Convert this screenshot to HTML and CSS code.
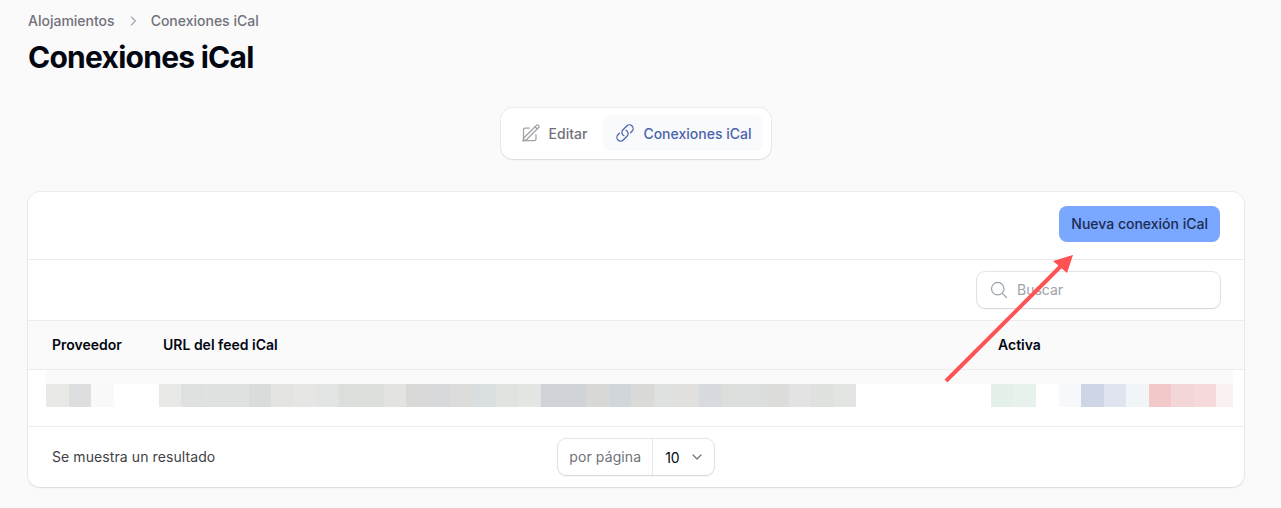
FILE: index.html
```html
<!DOCTYPE html>
<html lang="es">
<head>
  <meta charset="UTF-8">
  <title>Conexiones iCal</title>
  <link rel="stylesheet" href="styles.css">
</head>
<body>

  <nav class="breadcrumb">
    <span>Alojamientos</span>
    <svg class="crumb-sep" viewBox="0 0 20 20"><path d="M7.500 4.500 13 10l-5.500 5.500"/></svg>
    <span>Conexiones iCal</span>
  </nav>
  <h1 class="title">Conexiones iCal</h1>

  <div class="tabs-wrap">
    <div class="tabs">
      <a class="tab">
        <svg class="tab-icon" viewBox="0 0 24 24"><path d="m16.862 4.487 1.687-1.688a1.875 1.875 0 1 1 2.652 2.652L6.832 19.820a4.500 4.500 0 0 1-1.897 1.130l-2.685.8.8-2.685a4.500 4.500 0 0 1 1.130-1.897L16.863 4.487Zm0 0L19.500 7.125"/><path d="M18 14v4.750A2.250 2.250 0 0 1 15.750 21H5.250A2.250 2.250 0 0 1 3 18.750V8.250A2.250 2.250 0 0 1 5.250 6H10"/></svg>
        Editar
      </a>
      <a class="tab active">
        <svg class="tab-icon" viewBox="0 0 24 24"><path d="M13.190 8.688a4.500 4.500 0 0 1 1.242 7.244l-4.500 4.500a4.500 4.500 0 0 1-6.364-6.364l1.757-1.757m13.350-.622 1.757-1.757a4.500 4.500 0 0 0-6.364-6.364l-4.500 4.500a4.500 4.500 0 0 0 1.242 7.244"/></svg>
        Conexiones iCal
      </a>
    </div>
  </div>

  <section class="card">
    <div class="toolbar">
      <button class="btn-primary">Nueva conexión iCal</button>
    </div>
    <div class="searchbar">
      <label class="search">
        <svg class="search-icon" viewBox="0 0 24 24"><path d="m21 21-5.197-5.197m0 0A7.500 7.500 0 1 0 5.196 5.196a7.500 7.500 0 0 0 10.607 10.607Z"/></svg>
        <input type="text" placeholder="Buscar">
      </label>
    </div>
    <div class="thead">
      <span class="col-prov">Proveedor</span>
      <span class="col-url">URL del feed iCal</span>
      <span class="col-active">Activa</span>
    </div>
    <div class="trow">
      <div class="smear" id="smear"></div>
    </div>
    <div class="tfoot">
      <span class="count">Se muestra un resultado</span>
      <div class="perpage">
        <span class="perpage-label">por página</span>
        <span class="perpage-value">10
          <svg class="chevron" viewBox="0 0 20 20"><path d="m5 7.500 5 5 5-5"/></svg>
        </span>
      </div>
    </div>
  </section>

  <svg class="arrow" viewBox="0 0 1281 508">
    <line x1="946" y1="381" x2="1062" y2="265"/>
    <polygon points="1073,255 1053,261 1067,273"/>
  </svg>

  <script>
    // colores del bloque borroso, una celda por cada tramo
    const smearColors = [
      '#e8e9e4','#dcdfde','#f9f9f9','#fff','#fff','#e8e8e6','#dfe1e0','#e0e2e1','#e0e2e1','#dadcdb',
      '#e4e5e3','#e6e6e5','#e2e5e4','#dcdedb','#dcdedb','#e3e3e0','#d9dad7','#d6dadb','#dcdddb',
      '#d9dfe1','#e1e3df','#e4e6e4','#d0d4d8','#d0d4d8','#d8d9d7','#d0d6d9','#dadad8','#dfe1e0','#e0e0dd',
      '#d7dbdf','#dcdedc','#dbdedd','#dcdcda','#e2e3e2','#dfe1df','#e3e5e3','#fff','#fff','#fff',
      '#fff','#fff','#fff','#e3f1e8','#e8f2ec','#fff','#f7f8fb','#ced5e5','#e0e4f0','#f1f5f8',
      '#f2c8c9','#f3d6d8','#f6d9da','#f9f0f1'
    ];
    const smear = document.getElementById('smear');
    smearColors.forEach((color) => {
      const cell = document.createElement('span');
      cell.className = 'smear-cell';
      cell.style.background = color;
      smear.appendChild(cell);
    });
  </script>
</body>
</html>
```

FILE: styles.css
```css
body {
  font-family: 'Inter', sans-serif;
  background: #fafafa;
  color: #030712;
  margin: 0;
  padding: 12px 37px 0 28px;
  position: relative;
  height: 496px;
  overflow: hidden;
}

.breadcrumb {
  display: flex;
  align-items: center;
  gap: 10px;
  height: 17px;
  font-size: 14px;
  font-weight: 500;
  color: #71717a;
}

.crumb-sep {
  width: 16px;
  height: 16px;
  fill: none;
  stroke: #9ca3af;
  stroke-width: 1.500;
}

.title {
  margin: 10px 0 0;
  font-size: 30px;
  line-height: 36px;
  font-weight: 700;
  letter-spacing: -0.75px;
  color: #030712;
}

.tabs-wrap {
  display: flex;
  justify-content: center;
  margin-top: 33px;
}

.tabs {
  display: flex;
  gap: 4px;
  padding: 7px 8px 8px;
  background: white;
  border-radius: 12px;
  box-shadow: 0 1px 2px rgba(0, 0, 0, 0.08), 0 0 0 1px rgba(3, 7, 18, 0.05);
}

.tab {
  display: flex;
  align-items: center;
  gap: 8px;
  height: 36px;
  padding: 0 12px;
  border-radius: 8px;
  font-size: 14px;
  font-weight: 500;
  color: #71717a;
}

.tab.active {
  background: #f9fafb;
  color: #4b63ad;
}

.tab-icon {
  width: 20px;
  height: 20px;
  fill: none;
  stroke: #a1a1aa;
  stroke-width: 1.500;
  stroke-linecap: round;
  stroke-linejoin: round;
}

.tab.active .tab-icon {
  stroke: #4b63ad;
}

.card {
  margin-top: 33px;
  background: white;
  border-radius: 12px;
  box-shadow: 0 1px 2px rgba(0, 0, 0, 0.08), 0 0 0 1px rgba(3, 7, 18, 0.05);
}

.toolbar {
  display: flex;
  justify-content: flex-end;
  align-items: flex-start;
  height: 68px;
  padding: 14px 24px 0;
  box-sizing: border-box;
  border-bottom: 1px solid #ececed;
}

.btn-primary {
  height: 36px;
  padding: 0 12px 2px;
  border: none;
  border-radius: 8px;
  background: #7aa7ff;
  color: #1c2c52;
  font-family: inherit;
  font-size: 14px;
  font-weight: 500;
}

.searchbar {
  display: flex;
  justify-content: flex-end;
  align-items: center;
  height: 60px;
  padding: 0 24px;
  border-bottom: 1px solid #ececed;
}

.search {
  display: flex;
  align-items: center;
  gap: 8px;
  width: 243px;
  height: 36px;
  padding: 0 12px;
  box-sizing: border-box;
  border-radius: 8px;
  background: white;
  box-shadow: 0 1px 2px rgba(0, 0, 0, 0.08), 0 0 0 1px rgba(3, 7, 18, 0.1);
}

.search-icon {
  width: 20px;
  height: 20px;
  flex: none;
  fill: none;
  stroke: #9ca3af;
  stroke-width: 1.500;
  stroke-linecap: round;
  stroke-linejoin: round;
}

.search input {
  border: none;
  outline: none;
  width: 100%;
  padding: 0 0 2px;
  font-family: inherit;
  font-size: 14px;
  background: transparent;
}

.search input::placeholder {
  color: #a1a1aa;
}

.thead {
  display: flex;
  align-items: center;
  height: 49px;
  padding: 0 0 2px 24px;
  box-sizing: border-box;
  background: #fafafa;
  border-bottom: 1px solid #ececed;
  font-size: 14px;
  font-weight: 600;
  color: #030712;
}

.col-prov {
  width: 111px;
}

.col-url {
  width: 835px;
}

.trow {
  height: 56px;
  padding-left: 18px;
  border-bottom: 1px solid #ececed;
}

.smear {
  display: flex;
  width: 1187px;
  height: 37px;
  padding-top: 14px;
  box-sizing: border-box;
  background: linear-gradient(#fafafa 14px, transparent 14px);
}

.smear-cell {
  flex: none;
  width: 22.500px;
  height: 23px;
}

.smear-cell:last-child {
  width: 17px;
}

.tfoot {
  display: grid;
  grid-template-columns: 1fr auto 1fr;
  align-items: center;
  height: 60px;
  padding: 0 24px;
}

.count {
  padding-bottom: 2px;
  font-size: 14px;
  letter-spacing: 0.09px;
  color: #3f3f46;
}

.perpage {
  display: flex;
  align-items: center;
  height: 36px;
  border-radius: 8px;
  font-size: 14px;
  box-shadow: 0 1px 2px rgba(0, 0, 0, 0.08), 0 0 0 1px rgba(3, 7, 18, 0.1);
}

.perpage-label {
  display: flex;
  align-items: center;
  height: 100%;
  padding: 0 11px 2px;
  box-sizing: border-box;
  letter-spacing: 0.1px;
  color: #71717a;
  border-right: 1px solid #e5e7eb;
}

.perpage-value {
  display: flex;
  align-items: center;
  gap: 9px;
  padding: 0 9px 0 12px;
  color: #030712;
}

.chevron {
  width: 16px;
  height: 16px;
  fill: none;
  stroke: #71717a;
  stroke-width: 1.500;
  stroke-linecap: round;
  stroke-linejoin: round;
}

/* flecha roja encima de todo */
.arrow {
  position: absolute;
  top: 0;
  left: 0;
  width: 1281px;
  height: 508px;
  pointer-events: none;
}

.arrow line {
  stroke: #ff5252;
  stroke-width: 4;
}

.arrow polygon {
  fill: #ff5252;
}
```
